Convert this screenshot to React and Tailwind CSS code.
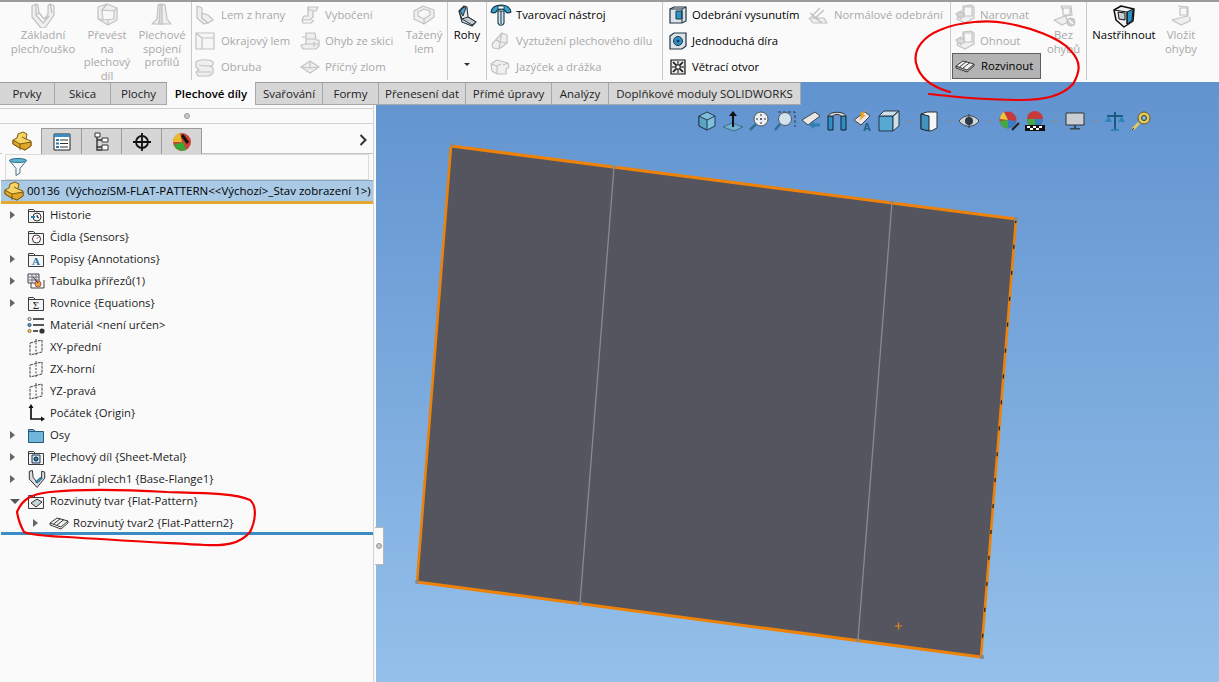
import React from "react";

const g = { stroke: "#c2c2c2", fill: "#efefef", strokeWidth: 1.2, strokeLinejoin: "round" };

const S = ({ s = 20, children, v = "0 0 20 20" }) => (
  <svg width={s} height={s} viewBox={v} className="shrink-0">{children}</svg>
);

const BaseFlange = () => (
  <S s={26} v="0 0 26 26"><path {...g} d="M2 4l4-2 2 1 1 8 5 6 4-5 0-8 2-2 4 2 0 9-9 13-4 0-9-11z" /><path {...g} fill="#fafafa" d="M6 13l7 8 6-7-5 3-5-6z" /><path {...g} fill="none" d="M6 2l0 11M20 2l2 9" /></S>
);
const Convert = () => (
  <S s={26} v="0 0 26 26"><path {...g} d="M4 5l9-3 10 4v12l-9 5-10-6z" /><path {...g} d="M8 8l12 1v8l-11 1z" fill="#f8f8f8" /><path {...g} fill="none" d="M14 23v-5M4 17l5 1M13 2l-5 6M23 6l-3 3" /></S>
);
const Loft = () => (
  <S s={26} v="0 0 26 26"><path {...g} d="M9 3c2-1 5-1 7 0l2 14 4 5h-19l5-5z" /><path {...g} fill="#dcdcdc" d="M13 3v19h-3l1-19z" /></S>
);
const EdgeFlange = () => (
  <S s={20}><path {...g} d="M2 1l5 2v10l6 5-4 1-7-6z" /><path {...g} d="M7 8l6 2 5 5-5 3-6-5z" /></S>
);
const Hem = () => (
  <S s={20}><path {...g} d="M1 2h18v16h-18z" fill="#f6f6f6" /><path {...g} fill="none" d="M7 18v-11h12M1 2l6 5" /></S>
);
const Flange = () => (
  <S s={20}><path {...g} d="M1 5c3-3 14-3 17 0 1 2 0 4-3 4l3 2v5l-4 3h-11l-2-4 3-2-3-3z" /><path {...g} fill="none" d="M4 8c3 1 8 1 11 1M3 15h13" /></S>
);
const Jog = () => (
  <S s={20}><path {...g} d="M8 2h10l-2 4h-3v6l-3 3h-8l2-4h4v-6z" /><path {...g} fill="none" d="M8 2l1 3h4M2 15l1 3h8l3-3" /></S>
);
const SketchBend = () => (
  <S s={20}><path {...g} d="M6 2h9l1 7h3v6l-3 3h-13l-2-4 5-1z" /><path {...g} fill="none" d="M6 8h10M5 13h14M2 6h4M14 11v5" /></S>
);
const CrossBreak = () => (
  <S s={20}><path {...g} d="M1 10l9-6 9 6-9 6z" /><path {...g} fill="none" d="M1 10l9 1 9-1M10 4v7" /></S>
);
const Lofted = () => (
  <S s={24} v="0 0 24 24"><path {...g} d="M2 7l9-5 11 4v7l-10 7-10-5z" /><path {...g} fill="#f7f7f7" d="M6 8l6-3 6 2v4l-6 4-6-3z" /><path {...g} fill="none" d="M12 15v5" /></S>
);
const Corners = () => (
  <S s={24} v="0 0 24 24">
    <path fill="#e4e8ec" stroke="#26343e" strokeWidth="1.1" strokeLinejoin="round" d="M4 7l5-5 3 1 1 10 8 5-4 4-10-4z" />
    <path fill="#4f9cc4" stroke="#26343e" strokeWidth="1" strokeLinejoin="round" d="M5 7l4-4 2 1-2 5-1 3z" />
    <path fill="#c3cad0" stroke="#26343e" strokeWidth="1" strokeLinejoin="round" d="M7 15l6-2 8 5-4 3z" />
    <path stroke="#26343e" strokeWidth="1" d="M4 7l3 8" />
  </S>
);
const FormTool = () => (
  <S s={22} v="0 0 22 22">
    <path fill="#37a3c9" stroke="#12384a" strokeWidth="1.1" d="M1 8c1-5 5-7 10-7s9 2 10 7c-2 1-4 1-5 0c-1-2-3-3-5-3s-4 1-5 3c-1 1-3 1-5 0z" />
    <path fill="#fff" stroke="#12384a" strokeWidth=".8" d="M8 2h6v3h-6z" />
    <path fill="#d8e2ea" stroke="#12384a" strokeWidth="1.1" d="M8 7h6v12c-1 3-5 3-6 0z" />
    <path stroke="#12384a" d="M11 7v13" />
  </S>
);
const Gusset = () => (
  <S s={20}><path {...g} d="M2 13l10-11 5 2v8l-8 6-6-1z" /><path {...g} fill="none" d="M12 2l-2 9 7 1M6 9l4 2-1 7" /></S>
);
const TabSlot = () => (
  <S s={20}><path {...g} d="M1 7l6-4 11 3 1 4-3 2v5h-9l-5-3z" /><path {...g} fill="none" d="M1 7l6 2 4-2M7 9v8M13 8l5-2" /></S>
);
const ExtCut = () => (
  <S s={20}><path fill="#dbe3ea" stroke="#20343f" strokeWidth="1.2" d="M2 4l4-2h12v14l-4 2h-12z" /><path fill="#2e93c8" stroke="#20343f" d="M8 6h6v8h-6z" /><path fill="none" stroke="#20343f" d="M2 4h12v14M14 4l4-2" /></S>
);
const Hole = () => (
  <S s={20}><path fill="#dbe3ea" stroke="#20343f" strokeWidth="1.2" d="M2 5l4-3h12v13l-4 3h-12z" /><circle cx="10" cy="10" r="4.5" fill="#2e93c8" stroke="#20343f" /><circle cx="10" cy="10" r="1.5" fill="#0e3a55" /></S>
);
const Vent = () => (
  <S s={20}><path fill="#e8e8e8" stroke="#111" strokeWidth="1.2" d="M3 3h14v14h-14z" /><path stroke="#111" strokeWidth="1.6" d="M5 5l10 10M15 5l-10 10" /><path stroke="#111" d="M10 4v12M4 10h12" /><circle cx="10" cy="10" r="2.2" fill="#fff" stroke="#111" /></S>
);
const NormalCut = () => (
  <S s={20}><path {...g} d="M1 13l4 5h14l-3-5z" /><path {...g} strokeWidth="1.4" fill="none" d="M3 12l9-9M6 14l10-9M2 8l9 7M14 18l-9-7" /></S>
);
const Jog2 = ({ arrow }) => (
  <S s={22} v="0 0 22 22"><path {...g} d="M9 2l8-1 3 2v11l-9 5-8-4 1-3 5 0z" /><path {...g} fill="#f8f8f8" d="M10 3h8v9h-8z" /><path {...g} fill={arrow ? "#d5d5d5" : "#dedede"} d="M2 10l5-3v2h3v4h-3v2z" /></S>
);
const NoBends = () => (
  <S s={24} v="0 0 24 24"><path {...g} d="M9 2l10 0 1 9-6 1h-1l-11 4 8 5 6-3z" /><path {...g} fill="#f8f8f8" d="M11 4h7v7h-7z" /><circle cx="19" cy="18" r="4" fill="#cfcfcf" stroke="#bdbdbd" /><path stroke="#fff" strokeWidth="1.3" d="M17 16l4 4" /></S>
);
const Rip = () => (
  <S s={24} v="0 0 24 24"><path fill="#f3f3f3" stroke="#111" strokeWidth="1.5" strokeLinejoin="round" d="M2 6l7-4 13 3-1 12-9 6-8-7z" /><path fill="#2793c6" stroke="#111" d="M15 8l6-3-1 12-5 3z" /><path stroke="#111" d="M2 6l13 2v12" fill="none" /><path fill="#c8d0d6" stroke="#111" d="M6 8l7 1v7l-6-1z" /></S>
);
const Insert = () => (
  <S s={24} v="0 0 24 24"><path {...g} d="M9 2l10 1v9l-5 1-11 3 9 5 9-4v-4" /><path {...g} fill="#f8f8f8" d="M11 4h7v7h-7z" /></S>
);
const Unfold = ({ s = 20 }) => (
  <S s={s} v="0 0 20 20"><path fill="#efefef" stroke="#3c3c3c" strokeWidth="1" strokeLinejoin="round" d="M1 10l7-5 11 3-7 6z" /><path stroke="#3c3c3c" strokeWidth="1" d="M4.5 11l7-5.5M8 12l7-5.5" /><path stroke="#3c3c3c" d="M1 10v2l11 4 7-6v-2" fill="none" /></S>
);

const tt = "text-[11.3px] leading-[13.5px]";
const tb = "text-[11.5px] leading-[13.5px]";
const Row = ({ icon, label, off, slot = 26, pl = 3, extra = "" }) => (
  <div className={`flex items-center h-[26px] whitespace-nowrap ${extra}`} style={{ paddingLeft: pl }}>
    <span className="flex items-center justify-start" style={{ width: slot }}>{icon}</span>
    <span className={`${tt} ${off ? "text-[#a9a9a9]" : "text-black"}`}>{label}</span>
  </div>
);
const Big = ({ icon, lines, off, w, extra = "" }) => (
  <div className={`flex flex-col items-center shrink-0 ${extra}`} style={{ width: w }}>
    <div className="h-[26px] flex items-end justify-center">{icon}</div>
    {lines.map((l) => (
      <span key={l} className={`${tt} whitespace-nowrap ${off ? "text-[#a9a9a9]" : "text-black"}`}>{l}</span>
    ))}
  </div>
);
const Sep = () => <div className="w-px h-[78px] bg-[#c9c9c9] shrink-0" />;

const Ribbon = () => (
  <div className="h-[82px] border-t-2 border-[#9b9b9b] bg-[#fafafa] flex shrink-0">
    <div className="flex w-[191px] shrink-0">
      <Big w={86} off icon={<BaseFlange />} lines={["Základní", "plech/ouško"]} />
      <Big w={42} off icon={<Convert />} lines={["Převést", "na", "plechový", "díl"]} />
      <Big w={44} off extra="ml-[12px]" icon={<Loft />} lines={["Plechové", "spojení", "profilů"]} />
    </div>
    <Sep />
    <div className="flex w-[255px] shrink-0">
      <div className="w-[108px] shrink-0">
        <Row off icon={<EdgeFlange />} label="Lem z hrany" />
        <Row off icon={<Hem />} label="Okrajový lem" />
        <Row off icon={<Flange />} label="Obruba" />
      </div>
      <div className="w-[101px] shrink-0">
        <Row off pl={0} slot={25} icon={<Jog />} label="Vybočení" />
        <Row off pl={0} slot={25} icon={<SketchBend />} label="Ohyb ze skici" />
        <Row off pl={0} slot={25} icon={<CrossBreak />} label="Příčný zlom" />
      </div>
      <Big w={46} off icon={<Lofted />} lines={["Tažený", "lem"]} />
    </div>
    <Sep />
    <div className="w-[38px] shrink-0 flex flex-col items-center">
      <div className="h-[26px] flex items-end"><Corners /></div>
      <span className={`${tt} text-black`}>Rohy</span>
      <span className="mt-[21px] w-0 h-0 border-x-[3px] border-x-transparent border-t-[3px] border-t-[#333]" />
    </div>
    <Sep />
    <div className="w-[175px] shrink-0">
      <Row icon={<FormTool />} label="Tvarovací nástroj" />
      <Row off icon={<Gusset />} label="Vyztužení plechového dílu" />
      <Row off icon={<TabSlot />} label="Jazýček a drážka" />
    </div>
    <Sep />
    <div className="w-[287px] shrink-0 flex">
      <div className="w-[145px] shrink-0">
        <Row pl={5} slot={24} icon={<ExtCut />} label="Odebrání vysunutím" />
        <Row pl={5} slot={24} icon={<Hole />} label="Jednoduchá díra" />
        <Row pl={5} slot={24} icon={<Vent />} label="Větrací otvor" />
      </div>
      <Row off pl={0} icon={<NormalCut />} label="Normálové odebrání" />
    </div>
    <Sep />
    <div className="flex w-[135px] shrink-0">
      <div className="w-[90px] shrink-0">
        <Row off icon={<Jog2 arrow />} label="Narovnat" />
        <Row off icon={<Jog2 />} label="Ohnout" />
        <Row pl={2} icon={<Unfold />} label="Rozvinout" extra="bg-[#b3b3b3] border border-[#5f5f5f] ml-px -mt-px" />
      </div>
      <Big w={45} off icon={<NoBends />} lines={["Bez", "ohybů"]} />
    </div>
    <Sep />
    <Big w={74} icon={<Rip />} lines={["Nastřihnout"]} />
    <Big w={40} off icon={<Insert />} lines={["Vložit", "ohyby"]} />
  </div>
);

const tabs = [
  ["Prvky", 55], ["Skica", 56], ["Plochy", 56], ["Plechové díly", 89], ["Svařování", 67], ["Formy", 56],
  ["Přenesení dat", 87], ["Přímé úpravy", 86], ["Analýzy", 57], ["Doplňkové moduly SOLIDWORKS", 192],
];
const Tabs = () => (
  <div className="absolute left-0 top-0 z-20 flex h-[22px] border-t border-[#9b9b9b]">
    {tabs.map(([t, w], i) => (
      <div
        key={t}
        style={{ width: w }}
        className={`${tb} h-[22px] flex items-center justify-center border-r border-[#a8a8a8] whitespace-nowrap ${i === 3 ? "bg-[#fafafa] font-semibold text-black -mt-px h-[23px]" : "bg-[#d6d6d6] text-[#222] border-b"}`}
      >{t}</div>
    ))}
  </div>
);

const Folder = ({ children, fill = "#f4f4f4", line = "#3c3c3c" }) => (
  <S s={18} v="0 0 18 18">
    <path fill={fill} stroke={line} d="M1.5 3.5v13h15v-11h-8l-2-2z" />
    <path stroke={line} fill="none" d="M1.5 5.5h7" />
    {children}
  </S>
);
const Plane = () => (
  <S s={18} v="0 0 18 18"><path fill="#fafafa" stroke="#444" strokeDasharray="3 1" d="M3 5l12-3v12l-12 3z" /><path stroke="#444" d="M9 1v16" strokeDasharray="2 1.5" /></S>
);
const tree = [
  [1, <Folder><circle cx="10" cy="11" r="4" fill="#fff" stroke="#333" /><path stroke="#1c7fb5" strokeWidth="2" fill="none" d="M4 11h4" /><path stroke="#333" d="M10 9v2l2 1" /></Folder>, "Historie"],
  [0, <Folder><circle cx="9.5" cy="11" r="4" fill="#fff" stroke="#333" /><path stroke="#d33" d="M9.5 11l2-2" /></Folder>, "Čidla {Sensors}"],
  [1, <Folder><text x="9" y="15" textAnchor="middle" fontSize="11" fontWeight="700" fontFamily="Liberation Serif" fill="#1c6fa5">A</text></Folder>, "Popisy {Annotations}"],
  [1, <S s={18} v="0 0 18 18"><path fill="#eef" stroke="#444" d="M1 2h11v9h-11z" /><path stroke="#777" d="M1 5h11M1 8h11M5 2v9M9 2v9" /><path stroke="#444" fill="none" d="M4 11v5h13v-8" /><circle cx="11" cy="12" r="3" fill="#e8a33a" stroke="#a55" /><path stroke="#333" d="M6 5l5 6" /></S>, "Tabulka přířezů(1)"],
  [1, <Folder><text x="9" y="15" textAnchor="middle" fontSize="11" fontFamily="Liberation Serif" fill="#222">Σ</text></Folder>, "Rovnice {Equations}"],
  [0, <S s={18} v="0 0 18 18"><circle cx="2.5" cy="3" r="1.6" fill="#eee" stroke="#666" /><circle cx="2.5" cy="9" r="1.6" fill="#4b9ccc" stroke="#357" /><circle cx="2.5" cy="15" r="1.6" fill="#e8c33a" stroke="#975" /><path stroke="#222" strokeWidth="1.5" d="M6 3h11M6 9h11M6 15h5" /><circle cx="15" cy="15" r="2.6" fill="#333" /></S>, "Materiál <není určen>"],
  [0, <Plane />, "XY-přední"],
  [0, <Plane />, "ZX-horní"],
  [0, <Plane />, "YZ-pravá"],
  [0, <S s={18} v="0 0 18 18"><path stroke="#111" strokeWidth="1.7" fill="none" d="M4 3v12h12" /><path fill="#111" d="M4 0l2.5 4h-5zM18 15l-4 2.5v-5z" /></S>, "Počátek {Origin}"],
  [1, <Folder fill="#6fb5dc" line="#245a78" />, "Osy"],
  [1, <Folder><path fill="#cfe3ef" stroke="#235" d="M5 7h8v8h-8z" /><circle cx="9" cy="11" r="2" fill="#2b7fae" stroke="#123" /></Folder>, "Plechový díl {Sheet-Metal}"],
  [1, <S s={20} v="0 0 26 26"><path fill="#d9dee2" stroke="#333" strokeWidth="1.3" strokeLinejoin="round" d="M3 3l4-1 1 9 5 6 6-6v-8l4 1v8l-10 12-10-11z" /><path fill="#2f8fc2" stroke="#245" d="M11 17l6-6 3 1-6 6z" /></S>, "Základní plech1 {Base-Flange1}"],
  [2, <Folder><path fill="#c9d3da" stroke="#333" d="M4 11l6-4 5 3-6 5z" /></Folder>, "Rozvinutý tvar {Flat-Pattern}"],
];

const Arrow = ({ kind }) =>
  kind === 1 ? (
    <span className="w-0 h-0 border-y-[4px] border-y-transparent border-l-[5px] border-l-[#666]" />
  ) : kind === 2 ? (
    <span className="w-0 h-0 border-x-[5px] border-x-transparent border-t-[5px] border-t-[#555]" />
  ) : null;

const Block = () => (
  <S s={20} v="0 0 20 20"><path fill="#f6d463" stroke="#7a5a10" d="M1 9l4-2 1-4 5-2 4 2-1 5 5 2v5l-6 4-7-3-5-3z" /><path fill="#e0a62a" stroke="#7a5a10" d="M1 9l7 4 11-2v4l-6 4-7-3-5-3z" /><path stroke="#7a5a10" d="M8 13v6M14 8l-4-2" fill="none" /></S>
);

const Panel = () => (
  <div className="w-[376px] shrink-0 bg-[#fafafa] pr-[2px] relative z-10">
    <div className="h-full border-r border-[#d2d2d2] pt-[22px] flex flex-col">
      <div className="h-[5px] border-b border-[#d0d0d0]" />
      <div className="h-[15px] border-b border-[#d0d0d0] flex items-center justify-center">
        <span className="w-[6px] h-[6px] rounded-full bg-[#c8c8c8] border border-[#999]" />
      </div>
      <div className="flex h-[26px] mt-[4px] pl-[2px] border-b border-[#c4c4c4] relative">
        {[
          <Block />,
          <S s={20} v="0 0 20 20"><path fill="#fff" stroke="#222" d="M2 2h16v16h-16z" /><path fill="#3d8cc0" d="M2 2h16v3h-16z" /><path stroke="#2b79ad" strokeWidth="2" d="M4 8h3M4 11.5h3M4 15h3" /><path stroke="#333" d="M8 8h8M8 11.5h8M8 15h8" /></S>,
          <S s={20} v="0 0 20 20"><path fill="#fff" stroke="#333" d="M3 1h5v4h-5zM10 6h6v4h-6zM10 13h6v5h-6z" /><path stroke="#333" fill="none" d="M5 5v13h5M5 8h5M5 15h5" strokeWidth="1.4" /></S>,
          <S s={20} v="0 0 20 20"><circle cx="10" cy="10" r="6" fill="none" stroke="#111" strokeWidth="1.8" /><path stroke="#111" strokeWidth="1.8" d="M10 1v18M1 10h18" /></S>,
          <S s={20} v="0 0 20 20"><circle cx="10" cy="10" r="9" fill="#c43" /><path fill="#3a3" d="M2 13a9 9 0 0 0 12 5l-3-8z" /><path fill="#e8b92c" d="M1 10a9 9 0 0 1 7-9l2 9z" /><path stroke="#111" strokeWidth="3" d="M10 3l6 8" /></S>,
        ].map((ic, i) => (
          <div key={i} className={`w-[40px] h-[26px] flex items-center justify-center border-r border-t border-[#9c9c9c] ${i === 0 ? "bg-[#fafafa] border-t-0" : "bg-[#d6d6d6]"}`}>{ic}</div>
        ))}
        <svg width="8" height="12" viewBox="0 0 8 12" className="absolute left-[359px] top-[6px]"><path d="M1.5 1l5 5-5 5" fill="none" stroke="#333" strokeWidth="2" /></svg>
      </div>
      <div className="h-[26px] ml-[5px] mr-[4px] border border-[#dadada] bg-[#fafafa] flex items-center pl-[2px]">
        <S s={20} v="0 0 20 20"><path fill="#f4f8fa" stroke="#4a6f80" d="M1.5 3.5l6.5 8v7l4-2.5v-4.5l6.5-8z" /><ellipse cx="10" cy="3.5" rx="8.5" ry="2" fill="#5fb2d2" stroke="#2e6f8c" /></S>
      </div>
      <div className="h-[24px] ml-[1px] bg-[#a9c9e4] border-b-[3px] border-b-[#e3a832] border-t border-t-[#8aa6bd] flex items-center overflow-hidden whitespace-nowrap">
        <span className="ml-[3px] mr-[3px] shrink-0"><Block /></span>
        <span className={`${tb} text-black`}>00136&nbsp;&nbsp;(VýchozíSM-FLAT-PATTERN&lt;&lt;Výchozí&gt;_Stav zobrazení 1&gt;)</span>
      </div>
      <div>
        {tree.map(([a, ic, label]) => (
          <div key={label} className="flex items-center h-[22px] whitespace-nowrap">
            <span className="w-[27px] pl-[10px] flex items-center shrink-0"><Arrow kind={a} /></span>
            <span className="w-[23px] flex items-center shrink-0">{ic}</span>
            <span className={`${tt} text-[#1c1c1c]`}>{label}</span>
          </div>
        ))}
        <div className="flex items-center h-[22px] whitespace-nowrap">
          <span className="w-[49px] pl-[33px] flex items-center shrink-0"><Arrow kind={1} /></span>
          <span className="w-[24px] flex items-center shrink-0"><Unfold s={20} /></span>
          <span className={`${tt} text-[#1c1c1c]`}>Rozvinutý tvar2 {"{Flat-Pattern2}"}</span>
        </div>
        <div className="h-[3px] mt-[-2px] ml-px bg-[#3b8cc4]" />
      </div>
    </div>
    <div className="absolute left-[375px] top-[445px] w-[9px] h-[38px] bg-[#fafafa] border border-l-0 border-[#b5b5b5] flex items-center justify-center">
      <span className="w-[6px] h-[6px] rounded-full bg-[#c8c8c8] border border-[#999]" />
    </div>
  </div>
);

const Caret = () => <span className="w-0 h-0 border-x-[3px] border-x-transparent border-t-[3px] border-t-[#7c8ea6] mx-[2px]" />;
const vb = { stroke: "#26384a", strokeWidth: 1, strokeLinejoin: "round" };
const ToolBar = () => (
  <div className="absolute left-[320px] top-[27px] flex items-center h-[24px] gap-[4px]">
    <S s={22} v="0 0 22 22"><path {...vb} fill="#7ec0dc" d="M11 2l8 4v10l-8 4-8-4v-10z" /><path {...vb} fill="#58a5c8" d="M3 6l8 4v10l-8-4z" /><path {...vb} fill="none" d="M19 6l-8 4" /></S>
    <S s={22} v="0 0 22 22"><path fill="#6fb2cf" stroke="#3c6f8a" d="M1 17l9-4 11 4-9 4z" /><path stroke="#111" strokeWidth="2" d="M11 17v-13" /><path fill="#111" d="M11 1l4 5h-8z" /></S>
    <S s={22} v="0 0 22 22"><circle cx="13" cy="9" r="7" fill="#e8eef2" stroke="#555" /><path stroke="#333" d="M13 4v10M8 9h10" strokeDasharray="2 2" /><path stroke="#2e6f96" strokeWidth="2.5" d="M8 14l-6 6" /></S>
    <S s={22} v="0 0 22 22"><path stroke="#2b3a4a" strokeDasharray="3 2" fill="none" d="M4 2h17v15" /><circle cx="11" cy="9" r="6.5" fill="#cfe3ef" stroke="#555" /><path stroke="#2e6f96" strokeWidth="2.5" d="M6 14l-5 6" /></S>
    <S s={22} v="0 0 22 22"><path fill="#e8e8e8" stroke="#444" d="M2 10l13-8 5 4-12 9z" /><path fill="#2d7fb4" d="M9 15l5-4v2.500h6v3h-6v2.500z" /></S>
    <S s={22} v="0 0 22 22"><path fill="#2f8fc2" stroke="#123" d="M2 6v14h5v-14zM15 6v14h5v-14z" /><path fill="#d5dade" stroke="#333" d="M2 6c2-5 16-5 18 0h-5c-1-2-7-2-8 0z" /></S>
    <S s={22} v="0 0 22 22"><path fill="#e8e8e8" stroke="#444" d="M2 10l11-8 5 4-9 9z" /><path fill="#f0a020" d="M8 3l6-2-3 4 3 0-7 6 2-5z" /><text x="15" y="21" fontSize="11" fontWeight="700" fontFamily="Liberation Sans" textAnchor="middle" fill="#1b5f8a">A</text></S>
    <S s={22} v="0 0 22 22"><path fill="#55a9d2" stroke="#26384a" d="M1 6h14v15h-14z" /><path fill="#cfdfe8" stroke="#26384a" d="M1 6l5-5h15l-6 5zM15 6l6-5v15l-6 5z" /></S>
    <Caret />
    <S s={22} v="0 0 22 22"><path fill="#f2f6f8" stroke="#333" d="M3 4l6-2h10v16l-6 3-10-2z" /><path fill="#3f93bd" stroke="#223" d="M3 4l8 2v15l-8-2z" /></S>
    <Caret />
    <S s={22} v="0 0 22 22"><path fill="#d0d5d8" stroke="#445" d="M1 11c5-7 15-7 20 0-5 7-15 7-20 0z" /><circle cx="11" cy="11" r="4" fill="#2d3a46" /><path stroke="#2d3a46" d="M11 4v14" /></S>
    <Caret />
    <S s={22} v="0 0 22 22"><circle cx="10" cy="10" r="8.500" fill="#c53b3b" /><path fill="#44a944" d="M1.500 11a8.500 8.500 0 0 0 8.500 7.500v-8.500z" /><path fill="#3a7fc4" d="M18.500 11a8.500 8.500 0 0 1-8.500 7.500v-8.500z" /><path fill="#e8c93a" d="M2 9a8.500 8.500 0 0 1 4-7l4 8z" /><path stroke="#222" strokeWidth="2" d="M14 20l7-7" /></S>
    <S s={22} v="0 0 22 22"><circle cx="11" cy="9" r="8" fill="#c53b3b" /><path fill="#44a944" d="M3 9a8 8 0 0 0 8 8v-8z" /><path fill="#3a7fc4" d="M19 9a8 8 0 0 1-8 8v-8z" /><path fill="#111" d="M1 15h20v6h-20z" /><path fill="#fff" d="M3 16h3v2h-3zM9 16h3v2h-3zM15 16h3v2h-3zM6 18h3v2h-3zM12 18h3v2h-3z" /></S>
    <Caret />
    <S s={22} v="0 0 22 22"><path fill="#c8ced4" stroke="#333" d="M2 3h18v12h-18z" /><path fill="#3a4650" d="M10 15h2v3h-2zM6 18h10v1.500h-10z" /></S>
    <Caret />
    <S s={22} v="0 0 22 22"><path stroke="#1d5a80" strokeWidth="2" d="M11 2v17M3 6h16" /><path fill="#2e85b5" d="M7 19h8v2h-8zM1 12h7l-3.500-6zM14 12h7l-3.500-6z" /></S>
    <S s={22} v="0 0 22 22"><circle cx="14" cy="8" r="6" fill="#e5c95a" stroke="#6a5a20" /><circle cx="14" cy="8" r="2.500" fill="#7fb9d8" stroke="#333" /><path stroke="#e5c95a" strokeWidth="3" d="M9 13l-6 6" /><path stroke="#444" d="M2 20l2-2" /></S>
  </div>
);

const Viewport = () => (
  <div className="flex-1 relative bg-gradient-to-b from-[#6193cf] to-[#94c0ea] overflow-hidden">
    <svg width="843" height="600" viewBox="376 82 843 600" className="absolute left-0 top-0">
      <polygon points="451,146 1016,219 981,657 417,582" fill="#54555f" />
      <path d="M614 167L580 603M892 202L858 640" stroke="#8a8a8e" strokeWidth="1.3" fill="none" />
      <path d="M1016 219L981 657M451 146L417 582" stroke="#ee8208" strokeWidth="2.6" />
      <path d="M451 146L1016 219M417 582L981 657" stroke="#ee8208" strokeWidth="3" />
      <path d="M1016 219L981 657" stroke="#222" strokeWidth="1.3" strokeDasharray="4 22" />
      <g fill="#8a8a8a">
        <circle cx="452" cy="145" r="2" /><circle cx="614" cy="167" r="1.8" /><circle cx="892" cy="202" r="1.8" /><circle cx="1016" cy="219" r="2" />
        <circle cx="417" cy="582" r="2" /><circle cx="580" cy="603" r="2" /><circle cx="858" cy="640" r="2" /><circle cx="982" cy="657" r="2.200" />
      </g>
      <path d="M895 626h7M898.500 622.500v7" stroke="#f08010" strokeWidth="1.2" />
    </svg>
    <ToolBar />
  </div>
);

export default function App() {
  return (
    <div className="w-[1219px] h-[682px] relative overflow-hidden flex flex-col font-['Open_Sans',sans-serif] bg-[#fafafa]">
      <Ribbon />
      <div className="relative flex flex-1 min-h-0">
        <Panel />
        <Viewport />
        <Tabs />
      </div>
      <svg width="1219" height="682" className="absolute left-0 top-0 z-30 pointer-events-none">
        <path fill="none" stroke="#f00000" strokeWidth="2.2" strokeLinecap="round" d="M950 92C935 88 920 80 916 63C913 48 925 36 940 30C960 21 990 20 1005 23C1030 27 1060 38 1070 50C1082 62 1080 72 1073 84C1062 96 1045 100 1020 100C990 100 955 97 929 94" />
        <path fill="none" stroke="#f00000" strokeWidth="2.2" strokeLinecap="round" d="M17 512C22 500 30 494 50 492C80 489 130 490 167 492C200 493 235 493 250 500C257 506 256 520 250 532C240 544 225 546 205 545C170 543 110 540 67 537C45 536 30 535 24 532C20 525 18 518 17 512" />
      </svg>
    </div>
  );
}
